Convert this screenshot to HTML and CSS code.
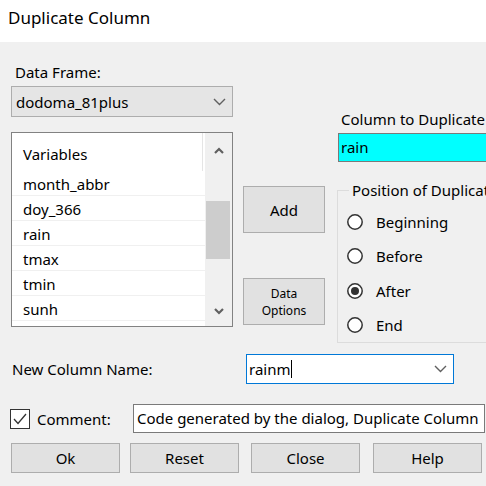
FILE: index.html
```html
<!DOCTYPE html>
<html>
<head>
<meta charset="utf-8">
<link rel="stylesheet" href="styles.css">
</head>
<body>
<div class="titlebar">Duplicate Column</div>
<div class="dialog">
  <div class="top">
    <div class="col-left">
      <div class="lbl lbl-df">Data Frame:</div>
      <div class="combo combo-gray">
        <span>dodoma_81plus</span>
        <svg class="chev" width="13" height="8" viewBox="0 0 13 8"><polyline points="1,1 6.5,6.5 12,1" fill="none" stroke="#606060" stroke-width="1.4"/></svg>
      </div>
      <div class="list">
        <div class="list-main">
          <div class="list-head">Variables</div>
          <div class="row">month_abbr</div>
          <div class="row">doy_366</div>
          <div class="row">rain</div>
          <div class="row">tmax</div>
          <div class="row">tmin</div>
          <div class="row">sunh</div>
        </div>
        <div class="scroll">
          <div class="sb-up"><svg width="10" height="7" viewBox="0 0 10 7"><polyline points="1,6 5,2 9,6" fill="none" stroke="#606060" stroke-width="2.2"/></svg></div>
          <div class="sb-track"><div class="sb-thumb"></div></div>
          <div class="sb-down"><svg width="10" height="7" viewBox="0 0 10 7"><polyline points="1,1 5,5 9,1" fill="none" stroke="#606060" stroke-width="2.2"/></svg></div>
        </div>
      </div>
    </div>
    <div class="col-mid">
      <div class="btn btn-add">Add</div>
      <div class="btn btn-opts">Data<br>Options</div>
    </div>
    <div class="col-right">
      <div class="lbl lbl-col">Column to Duplicate</div>
      <div class="cyan">rain</div>
      <fieldset class="group">
        <legend>Position of Duplicate</legend>
        <div class="radio-row"><svg class="radio" width="16" height="16" viewBox="0 0 16 16"><circle cx="8" cy="8" r="7.2" fill="#fff" stroke="#333" stroke-width="1.5"/></svg>Beginning</div>
        <div class="radio-row"><svg class="radio" width="16" height="16" viewBox="0 0 16 16"><circle cx="8" cy="8" r="7.2" fill="#fff" stroke="#333" stroke-width="1.5"/></svg>Before</div>
        <div class="radio-row"><svg class="radio" width="16" height="16" viewBox="0 0 16 16"><circle cx="8" cy="8" r="7.2" fill="#fff" stroke="#333" stroke-width="1.5"/><circle cx="8" cy="8" r="4" fill="#333"/></svg>After</div>
        <div class="radio-row"><svg class="radio" width="16" height="16" viewBox="0 0 16 16"><circle cx="8" cy="8" r="7.2" fill="#fff" stroke="#333" stroke-width="1.5"/></svg>End</div>
      </fieldset>
    </div>
  </div>
  <div class="name-row">
    <div class="name-lbl">New Column Name:</div>
    <div class="combo combo-edit">
      <span class="edit-text">rainm<span class="caret"></span></span>
      <svg class="chev" width="13" height="8" viewBox="0 0 13 8"><polyline points="1,1 6.5,6.5 12,1" fill="none" stroke="#606060" stroke-width="1.4"/></svg>
    </div>
  </div>
  <div class="comment-row">
    <svg class="check" width="20" height="20" viewBox="0 0 20 20"><rect x="0.5" y="0.5" width="19" height="19" fill="#fff" stroke="#333"/><polyline points="4,10 8,14.5 16,5" fill="none" stroke="#333" stroke-width="1.3"/></svg>
    <div class="comment-lbl">Comment:</div>
    <div class="textbox">Code generated by the dialog, Duplicate Column</div>
  </div>
  <div class="btn-row">
    <div class="btn btn-ok">Ok</div>
    <div class="btn btn-reset">Reset</div>
    <div class="btn btn-close">Close</div>
    <div class="btn btn-help">Help</div>
  </div>
</div>
</body>
</html>
```

FILE: styles.css
```css
html, body {
  margin: 0;
  padding: 0;
}
body {
  width: 486px;
  height: 486px;
  overflow: hidden;
  background: #f0f0f0;
  font-family: "Noto Sans", "Open Sans", sans-serif;
  font-size: 15px;
  color: #000;
}
.titlebar {
  height: 42px;
  background: #fff;
  padding-left: 8px;
  font-size: 17px;
  line-height: 36px;
  box-sizing: border-box;
}
.dialog {
  padding-left: 11px;
}
.top {
  display: flex;
  align-items: flex-start;
  height: 300px;
}
.lbl {
  line-height: 20px;
  white-space: nowrap;
}
.col-left {
  width: 222px;
  flex: none;
  margin-top: 20px;
}
.lbl-df {
  padding-left: 4px;
}
.combo {
  display: flex;
  align-items: center;
  justify-content: space-between;
  box-sizing: border-box;
  line-height: 20px;
}
.combo-gray {
  margin-top: 4px;
  height: 31px;
  border: 1px solid #adadad;
  background: #e5e5e5;
  padding: 0 6px 0 4px;
}
.list {
  margin-top: 15px;
  height: 195px;
  box-sizing: border-box;
  border: 1px solid #828282;
  background: #fff;
  display: flex;
}
.list-main {
  flex: 1;
  overflow: hidden;
}
.list-head {
  width: 191px;
  height: 38px;
  box-sizing: border-box;
  padding: 11px 0 0 11px;
  line-height: 20px;
  border-right: 1px solid #e5e5e5;
}
.row {
  height: 25px;
  box-sizing: border-box;
  padding: 2px 0 0 11px;
  line-height: 22px;
  border-bottom: 1px solid #f0f0f0;
}
.scroll {
  width: 27px;
  flex: none;
  background: #f0f0f0;
  display: flex;
  flex-direction: column;
}
.sb-up, .sb-down {
  display: flex;
  justify-content: center;
  align-items: center;
  flex: none;
}
.sb-up {
  height: 34px;
}
.sb-down {
  height: 30px;
}
.sb-track {
  flex: 1;
}
.sb-thumb {
  margin: 34px 2px 0 1px;
  height: 58px;
  background: #cdcdcd;
}
.col-mid {
  width: 82px;
  flex: none;
  margin-left: 10px;
  margin-top: 144px;
}
.btn {
  box-sizing: border-box;
  border: 1px solid #adadad;
  background: #e1e1e1;
  display: flex;
  align-items: center;
  justify-content: center;
  text-align: center;
}
.btn-add {
  height: 47px;
}
.btn-opts {
  margin-top: 45px;
  height: 47px;
  font-size: 12px;
  line-height: 17px;
}
.col-right {
  width: 200px;
  flex: none;
  margin-left: 12px;
  margin-top: 67px;
}
.lbl-col {
  padding-left: 4px;
}
.cyan {
  margin: 4px 0 0 1px;
  height: 29px;
  box-sizing: border-box;
  border: 1px solid #7a7a7a;
  background: #00ffff;
  padding-left: 2px;
  line-height: 27px;
}
.group {
  margin: 18px 0 0 0;
  padding: 5px 0 0 9px;
  border: 1px solid #dcdcdc;
  min-width: 0;
}
.group legend {
  margin-left: 2px;
  padding: 0 3px;
  line-height: 20px;
  white-space: nowrap;
}
.radio-row {
  height: 34.33px;
  display: flex;
  align-items: center;
  white-space: nowrap;
}
.radio {
  flex: none;
  margin-right: 13px;
}
.name-row {
  margin-top: 12px;
  height: 30px;
  display: flex;
  align-items: center;
}
.name-lbl {
  width: 235px;
  flex: none;
  padding-left: 1px;
  box-sizing: border-box;
}
.combo-edit {
  width: 208px;
  height: 30px;
  border: 1px solid #0078d7;
  background: #fff;
  padding: 0 6px 0 2px;
}
.edit-text {
  display: flex;
  align-items: center;
}
.caret {
  display: inline-block;
  width: 1px;
  height: 18px;
  background: #000;
  margin-left: 1px;
}
.comment-row {
  margin-top: 20px;
  height: 29px;
  display: flex;
  align-items: center;
}
.check {
  flex: none;
  margin-left: -1px;
}
.comment-lbl {
  width: 96px;
  flex: none;
  margin-left: 7px;
}
.textbox {
  width: 352px;
  flex: none;
  height: 29px;
  box-sizing: border-box;
  border: 1px solid #7a7a7a;
  background: #fff;
  padding-left: 3px;
  line-height: 27px;
  white-space: nowrap;
  overflow: hidden;
}
.btn-row {
  margin-top: 10px;
  display: flex;
}
.btn-row .btn {
  width: 109px;
  height: 30px;
  flex: none;
}
.btn-reset {
  margin-left: 10px;
}
.btn-close {
  margin-left: 12px;
}
.btn-help {
  margin-left: 13px;
}
```
